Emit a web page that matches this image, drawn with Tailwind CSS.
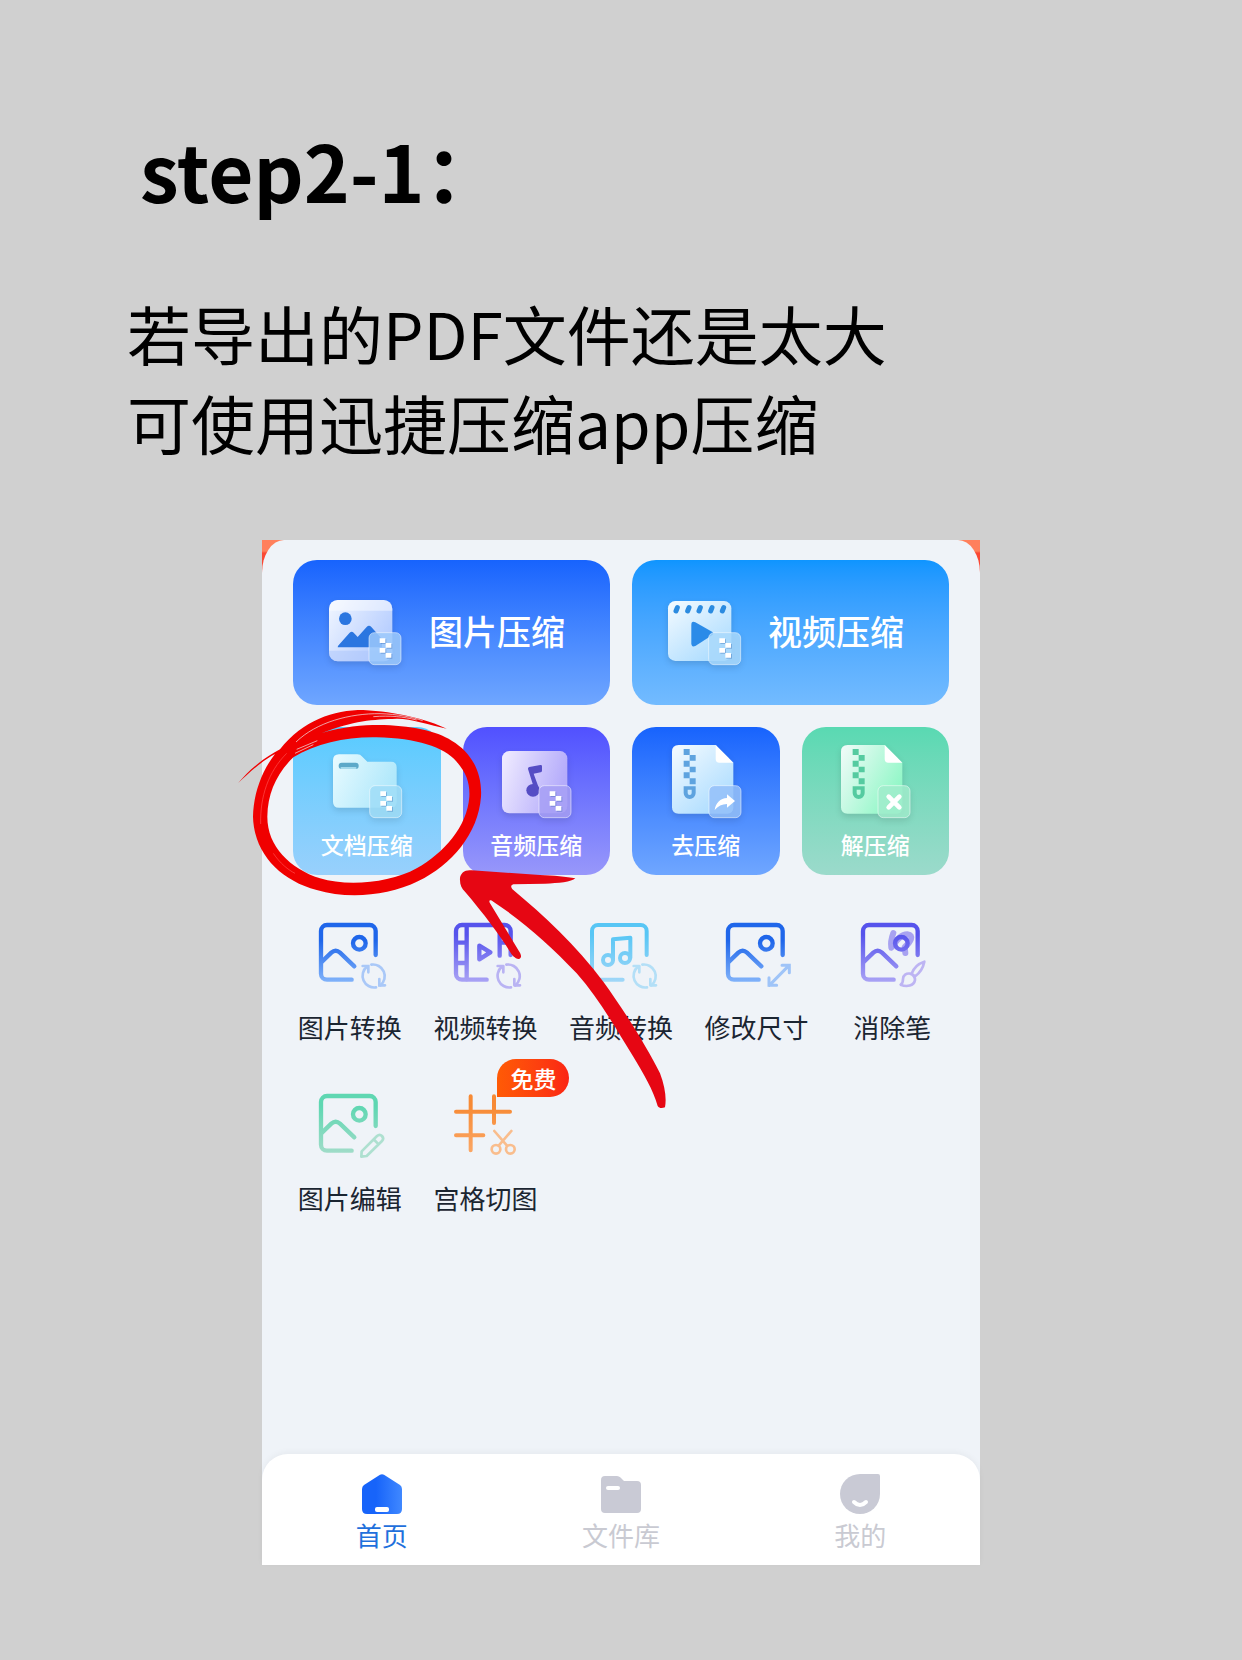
<!DOCTYPE html>
<html lang="zh-CN">
    <head>
        <meta charset="UTF-8" />
        <meta name="viewport" content="width=device-width, initial-scale=1.0" />
        <title>step2-1</title>
        <script src="https://cdn.jsdelivr.net/npm/@tailwindcss/browser@4"></script>
    </head>
    <body class="flex min-h-screen flex-col bg-[#d0d0d0] pb-[95px] font-['Noto_Sans_CJK_SC',sans-serif] text-black">
        <!-- shared gradients and icon parts -->
        <svg class="absolute size-0" aria-hidden="true">
            <defs>
                <linearGradient id="blue" gradientUnits="userSpaceOnUse" x1="0" y1="0" x2="0" y2="176">
                    <stop offset="0.3" stop-color="#1f66ea" />
                    <stop offset="1" stop-color="#80b2fa" />
                </linearGradient>
                <linearGradient id="violet" gradientUnits="userSpaceOnUse" x1="0" y1="0" x2="0" y2="176">
                    <stop offset="0.2" stop-color="#5653ec" />
                    <stop offset="1" stop-color="#a9a2f5" />
                </linearGradient>
                <linearGradient id="cyan" gradientUnits="userSpaceOnUse" x1="0" y1="0" x2="0" y2="176">
                    <stop offset="0.2" stop-color="#58c6f5" />
                    <stop offset="1" stop-color="#a0d7f8" />
                </linearGradient>
                <linearGradient id="green" gradientUnits="userSpaceOnUse" x1="0" y1="0" x2="0" y2="176">
                    <stop offset="0.2" stop-color="#5fd7b2" />
                    <stop offset="1" stop-color="#9fdcc8" />
                </linearGradient>
                <linearGradient id="orange" gradientUnits="userSpaceOnUse" x1="0" y1="0" x2="0" y2="176">
                    <stop offset="0.2" stop-color="#f78a35" />
                    <stop offset="1" stop-color="#fba765" />
                </linearGradient>
                <linearGradient id="tile-blue" x1="0" y1="0" x2="1" y2="0.6">
                    <stop offset="0" stop-color="#f1f6ff" />
                    <stop offset="1" stop-color="#b4ccff" />
                </linearGradient>
                <linearGradient id="tile-sky" x1="0" y1="0" x2="0.8" y2="1">
                    <stop offset="0" stop-color="#f5fbff" />
                    <stop offset="1" stop-color="#a9dbff" />
                </linearGradient>
                <linearGradient id="tile-cyan" x1="0" y1="0" x2="1" y2="0.4">
                    <stop offset="0" stop-color="#e9fbff" />
                    <stop offset="1" stop-color="#b0e8fb" />
                </linearGradient>
                <linearGradient id="tile-violet" x1="0" y1="0" x2="1" y2="0.3">
                    <stop offset="0" stop-color="#f1edff" />
                    <stop offset="1" stop-color="#b5acfb" />
                </linearGradient>
                <linearGradient id="tile-green" x1="0" y1="0" x2="1" y2="0.6">
                    <stop offset="0" stop-color="#f3fbfa" />
                    <stop offset="1" stop-color="#8ff7c6" />
                </linearGradient>
                <linearGradient id="home" x1="0" y1="0" x2="1" y2="0">
                    <stop offset="0.35" stop-color="#1764fa" />
                    <stop offset="1" stop-color="#4088ff" />
                </linearGradient>
            </defs>

            <symbol id="frame" overflow="visible">
                <path d="M170 96V24a18 18 0 0 0-18-18H24A18 18 0 0 0 6 24v128a18 18 0 0 0 18 18h74" />
            </symbol>
            <symbol id="picture" overflow="visible">
                <path d="M170 96V24a18 18 0 0 0-18-18H24A18 18 0 0 0 6 24v128a18 18 0 0 0 18 18h74" />
                <path d="M9 116l28-27q13-12 26 0l43 41" />
                <circle cx="121" cy="61" r="19" />
            </symbol>
            <symbol id="refresh" overflow="visible">
                <path d="M144 131a35 35 0 0 0 27 62M157 125a35 35 0 0 1 27 62" />
                <path d="M131 129h17v19M198 187h-17v-19" />
            </symbol>
            <symbol id="plate" overflow="visible">
                <rect width="96" height="96" rx="16" fill-opacity="0.85" stroke="#fff" stroke-opacity="0.5" stroke-width="3" />
            </symbol>
            <symbol id="checks" overflow="visible">
                <path d="M35 20h17v14H35zM53 34h17v14H53zM35 49h17v14H35zM53 64h17v14H53z" fill="#1e50a0" fill-opacity="0.3" />
                <path d="M32 17h17v14H32zM50 31h17v14H50zM32 46h17v14H32zM50 61h17v14H50z" fill="#fff" />
            </symbol>
            <symbol id="zip" overflow="visible">
                <path d="M35 12h18v18H35zM53 30h18v17H53zM35 47h18v18H35zM53 65h18v17H53zM35 82h18v18H35zM53 100h18v18H53z" />
                <path fill-rule="evenodd" d="M35 124h36v20a18 18 0 0 1-36 0zM47 134v10a6 6 0 0 0 12 0v-10z" />
            </symbol>
        </svg>

        <header class="px-[127px] pt-[121px]">
            <h1 class="pl-[13px] text-[78px] leading-[96px] font-bold">step2-1：</h1>
            <p class="mt-[71px] text-[64px] leading-[89px]">若导出的PDF文件还是太大<br />可使用迅捷压缩app压缩</p>
        </header>

        <main class="relative mx-auto mt-[74px] flex w-full max-w-[718px] flex-1 flex-col bg-linear-to-b from-[#ff805c] from-[11px] to-[#fa4834] to-[13px]">
            <div class="flex flex-1 flex-col rounded-t-[22px_33px] bg-[#eff3f8] pt-5">
                <section class="grid grid-cols-4 gap-[22px] px-[31px] font-medium text-white">
                    <button type="button" class="col-span-2 flex h-[145px] items-center gap-[29px] rounded-3xl bg-linear-to-b from-[#1763fd] to-[#6fa6ff] pl-9 text-[34px] leading-10">
                        <svg class="h-[65px] w-[71px] overflow-visible drop-shadow-md" viewBox="0 0 213 195">
                            <rect width="190" height="184" rx="26" fill="url(#tile-blue)" />
                            <path d="M0 32V26A26 26 0 0 1 26 0h138a26 26 0 0 1 26 26v6z" fill="#fff" fill-opacity="0.45" />
                            <path d="M0 152h190v6a26 26 0 0 1-26 26H26a26 26 0 0 1-26-26z" fill="#a9c4fb" fill-opacity="0.5" />
                            <circle cx="49" cy="56" r="19" fill="#2b76e0" />
                            <path d="M26 142q0-4 4-8l32-36q6-6 12 0l12 13 27-30q7-7 14 0l32 36v25z" fill="#2b76e0" />
                            <g transform="translate(120 98)"><use href="#plate" fill="#9cc9fc" /><use href="#checks" /></g>
                        </svg>
                        <span class="-mt-1">图片压缩</span>
                    </button>
                    <button type="button" class="col-span-2 flex h-[145px] items-center gap-[29px] rounded-3xl bg-linear-to-b from-[#0e95ff] to-[#73bbff] pl-9 text-[34px] leading-10">
                        <svg class="h-[65px] w-[71px] overflow-visible drop-shadow-md" viewBox="0 0 213 195">
                            <rect width="190" height="180" y="3" rx="22" fill="url(#tile-sky)" />
                            <path d="M24 33l4-10M59 33l4-10M93 33l4-10M128 33l4-10M163 33l4-10" stroke="#2b8be0" stroke-width="15" stroke-linecap="round" />
                            <path d="M70 75q0-14 12-8l50 28q8 5 0 11l-50 32q-12 5-12-8z" fill="#2b8be8" />
                            <g transform="translate(122 98)"><use href="#plate" fill="#a8d8fc" /><use href="#checks" /></g>
                        </svg>
                        <span class="-mt-1">视频压缩</span>
                    </button>

                    <button type="button" class="flex h-[148px] flex-col items-center rounded-3xl bg-linear-to-b from-[#56cbff] to-[#98d0fc] pt-[18px] text-[23px] leading-7">
                        <svg class="h-[73px] w-[68px] overflow-visible drop-shadow-md" viewBox="0 0 204 219">
                            <path d="M18 28h55q9 0 15 7l15 15h71q17 0 17 17v103q0 18-18 18H18q-18 0-18-18V46q0-18 18-18z" fill="url(#tile-cyan)" />
                            <rect x="17" y="53" width="60" height="19" rx="9" fill="#5da9c9" />
                            <path d="M25 69h43" stroke="#bdeaf8" stroke-width="5" stroke-linecap="round" />
                            <g transform="translate(110 122)"><use href="#plate" fill="#a0ddf7" /><use href="#checks" /></g>
                        </svg>
                        <span class="mt-3">文档压缩</span>
                    </button>
                    <button type="button" class="flex h-[148px] flex-col items-center rounded-3xl bg-linear-to-b from-[#5150ff] to-[#9897fa] pt-[18px] text-[23px] leading-7">
                        <svg class="h-[73px] w-[68px] overflow-visible drop-shadow-md" viewBox="0 0 204 219">
                            <rect y="18" width="196" height="187" rx="22" fill="url(#tile-violet)" />
                            <ellipse cx="93" cy="136" rx="20" ry="19" fill="#554dc4" />
                            <path d="M78 72q-1-5 4-6l33-6q5-1 5 4v13q0 4-4 5l-21 4 18 50-14 3z" fill="#554dc4" />
                            <g transform="translate(111 122)"><use href="#plate" fill="#a69ff5" /><use href="#checks" /></g>
                        </svg>
                        <span class="mt-3">音频压缩</span>
                    </button>
                    <button type="button" class="flex h-[148px] flex-col items-center rounded-3xl bg-linear-to-b from-[#1763fd] to-[#6fa6ff] pt-[18px] text-[23px] leading-7">
                        <svg class="h-[73px] w-[68px] overflow-visible drop-shadow-md" viewBox="0 0 204 219">
                            <path d="M20 0h111l53 53v134q0 19-19 19H20q-20 0-20-19V20Q0 0 20 0z" fill="url(#tile-sky)" />
                            <path d="M131 0l53 53h-42q-11 0-11-11z" fill="#fff" />
                            <use href="#zip" fill="#5ea3df" />
                            <g transform="translate(111 122)">
                                <use href="#plate" fill="#94c0f9" />
                                <path d="M17 73C20 52 34 37 54 37V26l24 20-24 20V55c-15 0-27 6-37 18z" fill="#fff" />
                            </g>
                        </svg>
                        <span class="mt-3">去压缩</span>
                    </button>
                    <button type="button" class="flex h-[148px] flex-col items-center rounded-3xl bg-linear-to-b from-[#59d9b2] to-[#9bdacb] pt-[18px] text-[23px] leading-7">
                        <svg class="h-[73px] w-[68px] overflow-visible drop-shadow-md" viewBox="0 0 204 219">
                            <path d="M20 0h111l53 53v134q0 19-19 19H20q-20 0-20-19V20Q0 0 20 0z" fill="url(#tile-green)" />
                            <path d="M131 0l53 53h-42q-11 0-11-11z" fill="#fff" />
                            <use href="#zip" fill="#55cba0" />
                            <g transform="translate(111 122)">
                                <use href="#plate" fill="#a0eccb" />
                                <path d="M32 33l32 32M64 33L32 65" stroke="#fff" stroke-width="14" stroke-linecap="round" />
                            </g>
                        </svg>
                        <span class="mt-3">解压缩</span>
                    </button>
                </section>

                <section class="mt-12 mb-10 grid grid-cols-5 gap-y-[51px] px-5 text-[26px] leading-8 text-[#1b2531]">
                    <button type="button" class="flex flex-col items-center gap-[22px]">
                        <svg class="h-[66px] w-[62px] overflow-visible" viewBox="0 0 186 198" fill="none" stroke-width="13" stroke-linecap="round">
                            <use href="#picture" stroke="url(#blue)" />
                            <use href="#refresh" stroke="#a9c8f8" stroke-width="8" />
                        </svg>
                        图片转换
                    </button>
                    <button type="button" class="flex flex-col items-center gap-[22px]">
                        <svg class="h-[66px] w-[62px] overflow-visible" viewBox="0 0 186 198" fill="none" stroke-width="13" stroke-linecap="round" stroke-linejoin="round">
                            <g stroke="url(#violet)">
                                <use href="#frame" />
                                <path d="M38 8v161M8 59h28M8 120h28M137 8v90M139 59h30M76 68l33 20-33 21z" />
                            </g>
                            <use href="#refresh" stroke="#b9b3f3" stroke-width="8" />
                        </svg>
                        视频转换
                    </button>
                    <button type="button" class="flex flex-col items-center gap-[22px]">
                        <svg class="h-[66px] w-[62px] overflow-visible" viewBox="0 0 186 198" fill="none" stroke-width="12" stroke-linecap="round" stroke-linejoin="round">
                            <g stroke="url(#cyan)">
                                <use href="#frame" />
                                <circle cx="54" cy="111" r="15" />
                                <circle cx="105" cy="105" r="15" />
                                <path d="M69 110V49l52-5v61" />
                            </g>
                            <use href="#refresh" stroke="#b3dff7" stroke-width="8" />
                        </svg>
                        音频转换
                    </button>
                    <button type="button" class="flex flex-col items-center gap-[22px]">
                        <svg class="h-[66px] w-[62px] overflow-visible" viewBox="0 0 186 198" fill="none" stroke-width="13" stroke-linecap="round">
                            <use href="#picture" stroke="url(#blue)" />
                            <path d="M130 187l59-60M168 127h22v22M152 187h-23v-23" stroke="#9fc4f8" stroke-width="9" />
                        </svg>
                        修改尺寸
                    </button>
                    <button type="button" class="flex flex-col items-center gap-[22px]">
                        <svg class="h-[66px] w-[62px] overflow-visible" viewBox="0 0 186 198" fill="none" stroke-width="13" stroke-linecap="round" stroke-linejoin="round">
                            <path d="M97 30c-6 16-8 32-6 44 12-14 24-40 48-40 22 2 10 24-8 38l2 18" stroke="#a8a2f1" stroke-width="18" />
                            <use href="#picture" stroke="url(#violet)" />
                            <path d="M190 116c-18 6-32 18-38 36l10 8c14-10 24-24 28-44zM148 152c-12-2-22 4-22 16 0 8-2 14-7 17 18 8 40 4 43-14 0-8-6-16-14-19z" stroke="#bdb4f3" stroke-width="8" />
                        </svg>
                        消除笔
                    </button>
                    <button type="button" class="flex flex-col items-center gap-[22px]">
                        <svg class="h-[66px] w-[62px] overflow-visible" viewBox="0 0 186 198" fill="none" stroke-width="13" stroke-linecap="round" stroke-linejoin="round">
                            <use href="#picture" stroke="url(#green)" />
                            <path d="M127 188l1-16 46-46q8-7 15 0 7 8 0 15l-46 45zM166 138l13 13" stroke="#aee0d0" stroke-width="8" />
                        </svg>
                        图片编辑
                    </button>
                    <button type="button" class="flex flex-col items-center gap-[22px]">
                        <span class="relative">
                            <svg class="h-[66px] w-[62px] overflow-visible" viewBox="0 0 186 198" fill="none" stroke-width="12" stroke-linecap="round">
                                <path d="M50 7v162M120 7v80M6 53h162M6 124h82" stroke="url(#orange)" />
                                <path d="M121 111l38 44M172 111l-38 44" stroke="#f9bd8d" stroke-width="8" />
                                <circle cx="126" cy="166" r="13" stroke="#f9bd8d" stroke-width="8" />
                                <circle cx="169" cy="166" r="13" stroke="#f9bd8d" stroke-width="8" />
                            </svg>
                            <span class="absolute -top-[35px] left-[43px] flex h-[38px] w-[72px] items-center justify-center rounded-[19px] rounded-bl-none bg-linear-to-r from-[#ff5a05] to-[#fb2313] text-[23px] font-medium text-white">免费</span>
                        </span>
                        宫格切图
                    </button>
                </section>

                <nav class="mt-auto grid grid-cols-3 rounded-t-[26px] bg-white pt-5 pb-[14px] text-[26px] leading-8 text-[#c9cad2] shadow-[0_-2px_6px_rgba(0,0,0,0.04)]">
                    <a href="#" class="flex flex-col items-center gap-[5px] text-[#1f70dc]">
                        <svg class="size-10" viewBox="0 0 40 40">
                            <path d="M18 .8q2-1.200 4 0l16 10.200q2 1.500 2 4V35q0 5-5 5H5q-5 0-5-5V15q0-2.500 2-4z" fill="url(#home)" />
                            <rect x="13" y="33" width="14" height="5" rx="2" fill="#fff" />
                        </svg>
                        首页
                    </a>
                    <a href="#" class="flex flex-col items-center gap-[5px]">
                        <svg class="size-10" viewBox="0 0 40 40">
                            <path d="M4 2h12q2 0 3.500 1.500L23 7h13q4 0 4 4v24q0 4-4 4H4q-4 0-4-4V6q0-4 4-4z" fill="#c9cad5" />
                            <rect x="5" y="12" width="14" height="4" rx="2" fill="#fff" />
                        </svg>
                        文件库
                    </a>
                    <a href="#" class="flex flex-col items-center gap-[5px]">
                        <svg class="size-10" viewBox="0 0 40 40">
                            <path d="M20 0h18q2 0 2 2v18A20 20 0 1 1 20 0z" fill="#c9cad5" />
                            <path d="M14 28q6 6 12 0" fill="none" stroke="#fff" stroke-width="4" stroke-linecap="round" />
                        </svg>
                        我的
                    </a>
                </nav>
            </div>

            <!-- hand drawn ring -->
            <svg class="pointer-events-none absolute top-40 -left-8 h-[210px] w-[270px]" viewBox="0 0 810 630" fill="none">
                <path
                    fill="#f00000"
                    fill-rule="evenodd"
                    d="M275 99C340 80 400 75 445 75C540 76 620 92 665 122C730 160 757 225 753 290C745 400 665 495 565 543C470 590 350 597 260 570C150 540 72 460 69 350C70 290 90 220 135 162C100 180 60 215 24 250C60 205 105 172 150 148C220 60 310 30 400 30C500 35 590 58 650 86C600 75 540 55 500 56C430 58 370 62 275 99ZM190 172C260 130 350 110 440 112C560 115 640 140 680 185C710 220 720 250 718 290C712 380 640 460 560 505C480 550 350 560 270 535C180 505 112 440 112 350C113 280 140 220 190 172Z"
                />
                <path d="M198 126C260 66 360 40 450 41C500 42 550 52 578 62" stroke="#eff3f8" stroke-width="2" />
                <path d="M430 50C480 46 520 50 560 60M200 148L262 122M195 160L250 134" stroke="#eff3f8" stroke-width="2" />
                <path d="M92 372C90 290 115 215 170 160M130 460C150 490 175 510 195 520" stroke="#ff5050" stroke-width="2" />
            </svg>

            <!-- arrow -->
            <svg class="pointer-events-none absolute top-80 left-[168px] size-[260px]" viewBox="0 0 780 780">
                <path
                    fill="#e60613"
                    d="M90 60C88 40 105 28 125 31L330 45C370 46 410 50 436 55C425 66 385 70 345 71L250 73C240 76 243 84 250 90C340 165 440 258 520 365C585 455 650 560 690 640C705 680 710 715 705 742C695 746 688 745 683 738C670 690 640 640 610 590C560 510 510 420 440 340C360 255 280 185 190 125C180 117 175 120 180 130L268 275C276 288 274 294 266 297C255 295 245 285 240 275C210 225 160 160 105 95C95 85 90 75 90 60Z"
                />
            </svg>
        </main>
    </body>
</html>
